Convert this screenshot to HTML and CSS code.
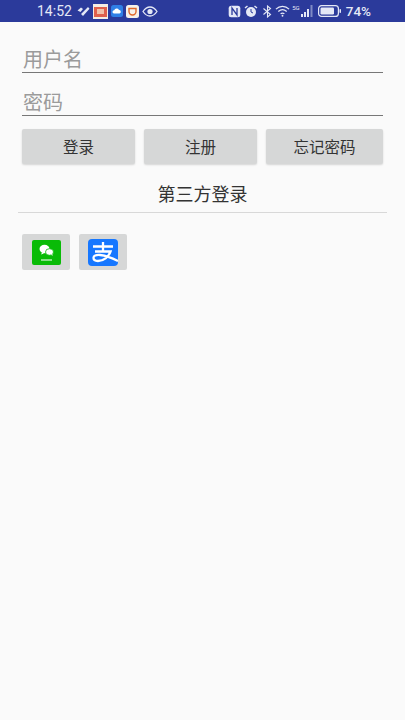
FILE: index.html
```html
<!DOCTYPE html>
<html lang="zh-CN">
<head>
    <meta charset="UTF-8">
    <meta name="viewport" content="width=device-width, initial-scale=1.0">
    <title>登录</title>
    <link rel="stylesheet" href="styles.css">
</head>
<body>

<!-- 状态栏 -->
<div class="status-bar">
    <div class="status-left">
        <span class="clock">14:52</span>
        <svg class="ic" width="13" height="11" viewBox="0 0 13 11"><path d="M.5 4.500L4 1.500l2 1.500-2.500 3zM4 8l7-7 1.500 1.800L6 10z" fill="#e4e8f6"/></svg>
        <svg class="ic" width="15" height="15" viewBox="0 0 15 15"><rect width="15" height="15" fill="#f4ece4"/><rect x="1" y="3" width="13" height="10" fill="#e0604c"/><rect x="4" y="5" width="7" height="5" fill="#f3c0a8"/></svg>
        <svg class="ic" width="12" height="12" viewBox="0 0 12 12"><rect width="12" height="12" rx="2.500" fill="#2f7fe6"/><path d="M3 8.500a1.600 1.600 0 0 1 .2-3.200A2.600 2.600 0 0 1 8 5a1.800 1.800 0 0 1 .6 3.500z" fill="#fff"/></svg>
        <svg class="ic" width="13" height="13" viewBox="0 0 13 13"><rect width="13" height="13" rx="2.500" fill="#f6f1ea"/><path d="M3 3.500h7v3a3.500 3.500 0 0 1-7 0z" fill="none" stroke="#e0682c" stroke-width="1.400"/></svg>
        <svg class="ic" width="16" height="11" viewBox="0 0 16 11"><path d="M1 5.500C3 2.500 5.300 1 8 1s5 1.500 7 4.500C13 8.500 10.700 10 8 10S3 8.500 1 5.500z" fill="none" stroke="#e4e8f6" stroke-width="1.300"/><circle cx="8" cy="5.500" r="2.600" fill="#e4e8f6"/></svg>
    </div>
    <div class="status-right">
        <svg class="ic" width="13" height="13" viewBox="0 0 13 13"><rect x=".7" y=".7" width="11.600" height="11.600" rx="2.500" fill="#e4e8f6"/><path d="M4 10V3l5 7V3" fill="none" stroke="#2b3a9b" stroke-width="1.300"/></svg>
        <svg class="ic" width="14" height="13" viewBox="0 0 14 13"><circle cx="7" cy="7" r="5" fill="#e4e8f6"/><path d="M1 3l2.500-2M13 3l-2.500-2" stroke="#e4e8f6" stroke-width="1.500"/><path d="M7 4v3l2 1" fill="none" stroke="#2b3a9b"/></svg>
        <svg class="ic ic-bt" width="11" height="13" viewBox="0 0 11 13"><path d="M1.500 3.500l7 6L5.500 12V1l3 2.500-7 6" fill="none" stroke="#e4e8f6" stroke-width="1.100"/></svg>
        <svg class="ic ic-tight" width="15" height="12" viewBox="0 0 16 12"><path d="M1 4c4-4 10-4 14 0M3.500 6.500c2.700-2.500 6.300-2.500 9 0M6 9c1.200-1 2.800-1 4 0" fill="none" stroke="#e4e8f6" stroke-width="1.300"/><circle cx="8" cy="11" r="1" fill="#e4e8f6"/></svg>
        <span class="net">5G</span>
        <svg class="ic ic-signal" width="12" height="12" viewBox="0 0 12 12"><path d="M0 9h2v3H0zM3 7h2v5H3zM6 4h2v8H6z" fill="#e4e8f6"/><path d="M9.500 0h2v12h-2z" fill="#7f8ac4"/></svg>
        <svg class="ic ic-battery" width="23" height="12" viewBox="0 0 23 12"><rect x=".6" y=".6" width="19.800" height="10.800" rx="3" fill="none" stroke="#e4e8f6" stroke-width="1.200"/><rect x="2.500" y="2.500" width="13.500" height="7" rx="1.200" fill="#e4e8f6"/><rect x="21.500" y="4" width="1.500" height="4" rx=".7" fill="#e4e8f6"/></svg>
        <span class="battery">74%</span>
    </div>
</div>

<div class="form">
    <div class="field">用户名</div>
    <div class="field field-pwd">密码</div>

    <div class="actions">
        <button class="btn">登录</button>
        <button class="btn">注册</button>
        <button class="btn btn-wide">忘记密码</button>
    </div>
</div>

<!-- 第三方登录 -->
<div class="third-title">第三方登录</div>
<div class="third-icons">
    <div class="icon-btn">
        <svg width="29" height="25" viewBox="0 0 29 25"><rect width="29" height="25" rx="2" fill="#09bb07"/><ellipse cx="12.500" cy="9" rx="5" ry="4.200" fill="#fff"/><ellipse cx="17.500" cy="12" rx="4" ry="3.300" fill="#fff" stroke="#09bb07" stroke-width=".8"/><path d="M10 12.500l-1 2 3-1zM19 14.500l1.500 1.500-.2-2z" fill="#fff"/><path d="M9 20h11" stroke="#bfeebd" stroke-width="1.400"/></svg>
    </div>
    <div class="icon-btn">
        <svg width="30" height="27" viewBox="0 0 30 27"><rect width="30" height="27" rx="4" fill="#1677ff"/><path d="M5 7.500h20M15 3v9M7 12.500h15.500c-2 5.500-7 9.500-12.500 9.500-3 0-4.500-1.300-4.500-3.200 0-4 9.500-4.500 24.500 3.200" fill="none" stroke="#fff" stroke-width="2.300"/></svg>
    </div>
</div>

</body>
</html>
```

FILE: styles.css
```css
body {
    margin: 0;
    background-color: #fafafa;
    font-family: "Liberation Sans", "Noto Sans CJK SC", sans-serif;
    color: #333;
}
.status-bar {
    display: flex;
    justify-content: space-between;
    align-items: center;
    height: 22px;
    padding: 0 34px 0 37px;
    background-color: #2b3a9b;
    color: #e4e8f6;
    font-family: Roboto, sans-serif;
    font-size: 13.500px;
}
.status-left, .status-right {
    display: flex;
    align-items: center;
    gap: 3px;
}
.clock {
    margin-right: 2px;
    font-size: 14px;
}
.net {
    margin: -7px 0 0 -1px;
    font-size: 6px;
}
.battery {
    margin-left: 2px;
    font-weight: 500;
}
.ic {
    display: block;
}
.ic-bt {
    margin-left: 1px;
}
.ic-tight {
    margin-left: -1px;
}
.ic-signal {
    margin-left: -2px;
}
.ic-battery {
    margin-left: 2px;
}
.form {
    padding: 0 22px;
}
.field {
    height: 28px;
    margin-top: 22px;
    border-bottom: 1px solid #777;
    color: #9b9b9b;
    font-size: 20px;
    line-height: 33px;
    padding-left: 1px;
}
.field-pwd {
    margin-top: 14px;
    line-height: 32px;
}
.actions {
    display: flex;
    gap: 9px;
    margin-top: 13px;
}
.btn {
    flex: 113;
    height: 35px;
    padding: 0 0 2px;
    border: none;
    border-radius: 2px;
    background-color: #d6d7d7;
    box-shadow: 0 1px 2px rgba(0, 0, 0, 0.15);
    color: #333;
    font-family: inherit;
    font-size: 15.500px;
}
.btn-wide {
    flex: 117;
}
.third-title {
    width: 369px;
    margin: 20px 18px 0;
    padding-bottom: 6px;
    border-bottom: 1px solid #d8d8d8;
    text-align: center;
    font-size: 18px;
    line-height: 22px;
}
.third-icons {
    display: flex;
    gap: 9px;
    margin: 21px 0 0 22px;
}
.icon-btn {
    display: flex;
    justify-content: center;
    align-items: center;
    width: 48px;
    height: 36px;
    border-radius: 2px;
    background-color: #d6d7d7;
}
```
